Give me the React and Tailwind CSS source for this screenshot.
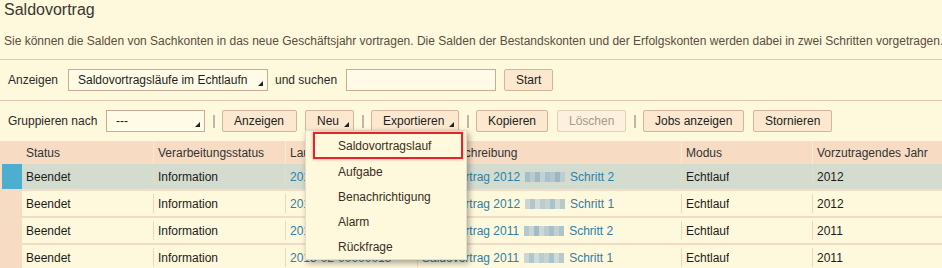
import React from "react";

const font = "font-['Liberation_Sans',Arial,sans-serif]";

function Tri() {
  return (
    <svg width="5" height="5" viewBox="0 0 5 5" className="absolute right-[4px] bottom-[4px]">
      <polygon points="5,0 5,5 0,5" fill="#222" />
    </svg>
  );
}

function Btn({ children, dd, disabled, w }) {
  return (
    <div
      className={`relative h-[22px] flex items-center justify-start pl-[11px] rounded-[2px] border ${
        disabled ? "border-[#e4d0bc] text-[#a8998a] bg-[#fdf0de]" : "border-[#d2b69b] text-[#222] bg-[#fce8cf]"
      } ${w}`}
    >
      {children}
      {dd && <Tri />}
    </div>
  );
}

function Sep() {
  return (
    <div className="w-[17px] flex justify-center">
      <div className="w-[2px] h-[13px] bg-[#c2b4a6]" />
    </div>
  );
}

function Select({ w, text }) {
  return (
    <div className={`relative h-[22px] border border-[#c9ae95] bg-[#fffbe7] flex items-center pl-[9px] text-[#1e1e1e] ${w}`}>
      {text}
      <Tri />
    </div>
  );
}

const blurA = ["bg-[#a5bfc9]", "bg-[#b9cbd0]", "bg-[#9fbac5]", "bg-[#c2d2d3]", "bg-[#a9c1ca]", "bg-[#b3c8ce]", "bg-[#9cb7c3]", "bg-[#bccdd1]"];
const blurB = ["bg-[#c9d6d4]", "bg-[#b0c6cc]", "bg-[#d1dcd8]", "bg-[#b9cccf]", "bg-[#c5d4d3]", "bg-[#aac2c9]", "bg-[#cfdbd7]", "bg-[#b6cace]"];
const blurC = ["bg-[#b3c8ce]", "bg-[#c7d5d4]", "bg-[#a2bcc6]", "bg-[#cbd8d6]", "bg-[#b8cbcf]", "bg-[#a6bfc8]", "bg-[#c1d1d2]", "bg-[#adc4cb]"];

function Blur({ pat }) {
  return (
    <div className="flex w-[40px] h-[10px] mx-[5px]">
      {pat.map((c, i) => (
        <div key={i} className={`w-[5px] h-[10px] ${c}`} />
      ))}
    </div>
  );
}

const rows = [
  { lauf: "2013-02-00000016", d: "Saldovortrag 2012", s: "Schritt 2", y: "2012", sel: true, pat: blurA },
  { lauf: "2013-02-00000015", d: "Saldovortrag 2012", s: "Schritt 1", y: "2012", pat: blurB },
  { lauf: "2013-02-00000014", d: "Saldovortrag 2011", s: "Schritt 2", y: "2011", pat: blurC },
  { lauf: "2013-02-00000013", d: "Saldovortrag 2011", s: "Schritt 1", y: "2011", pat: blurB },
];

const grid = "grid grid-cols-[22px_131px_132px_132px_264px_131px_130px]";

function Cell({ children, first, sel, cls = "" }) {
  return (
    <div className="flex items-stretch">
      {!first && <div className={`w-px my-[3px] ${sel ? "bg-[#e6dccb]" : "bg-[#f1d6bd]"}`} />}
      <div className={`flex items-center pl-[4px] whitespace-nowrap overflow-hidden ${cls}`}>{children}</div>
    </div>
  );
}

export default function App() {
  return (
    <div className={`relative w-[942px] h-[268px] overflow-hidden bg-[#fef8dc] text-[12px] ${font}`}>
      <div className="h-[20px] pl-[4px] text-[16px] leading-[20px] text-[#3a3632]">Saldovortrag</div>
      <div className="mt-[14px] pl-[4px] leading-[14px] text-[#5c4d40] whitespace-nowrap">
        Sie können die Salden von Sachkonten in das neue Geschäftsjahr vortragen. Die Salden der Bestandskonten und der Erfolgskonten werden dabei in zwei Schritten vorgetragen.
      </div>
      <div className="mt-[11px] h-px bg-[#e2c8b0]" />

      <div className="mt-[9px] h-[22px] flex items-center pl-[8px] text-[#2a2a2a]">
        <div className="w-[60px]">Anzeigen</div>
        <Select w="w-[200px]" text="Saldovortragsläufe im Echtlaufn" />
        <div className="w-[78px] pl-[7px]">und suchen</div>
        <div className="w-[150px] h-[22px] border border-[#c9ae95] bg-[#fffbe7]" />
        <div className="w-[8px]" />
        <Btn w="w-[49px]">Start</Btn>
      </div>

      <div className="mt-[9px] h-px bg-[#e2c8b0]" />

      <div className="mt-[9px] h-[22px] flex items-center pl-[8px] text-[#2a2a2a]">
        <div className="w-[98px]">Gruppieren nach</div>
        <Select w="w-[99px]" text="---" />
        <Sep />
        <Btn w="w-[75px]">Anzeigen</Btn>
        <div className="w-[8px]" />
        <Btn w="w-[49px]" dd>Neu</Btn>
        <Sep />
        <Btn w="w-[88px]" dd>Exportieren</Btn>
        <Sep />
        <Btn w="w-[72px]">Kopieren</Btn>
        <div className="w-[9px]" />
        <Btn w="w-[69px]" disabled>Löschen</Btn>
        <Sep />
        <Btn w="w-[101px]">Jobs anzeigen</Btn>
        <div className="w-[9px]" />
        <Btn w="w-[79px]">Stornieren</Btn>
      </div>

      <div className={`mt-[9px] h-[23px] bg-[#f7dcc3] text-[#333] ${grid}`}>
        <div />
        {["Status", "Verarbeitungsstatus", "Lauf", "Laufbeschreibung", "Modus", "Vorzutragendes Jahr"].map((h, i) => (
          <div key={h} className="flex items-stretch">
            {i > 0 && <div className="w-px bg-[#fbe9d8]" />}
            <div className="flex items-center pl-[4px] whitespace-nowrap">{h}</div>
          </div>
        ))}
      </div>

      {rows.map((r, i) => (
        <div
          key={i}
          className={`h-[27px] border-b-2 border-[#f3dcc6] ${grid} ${r.sel ? "bg-[#d3dccf]" : "bg-[#fef8dc]"} text-[#1c1c1c]`}
        >
          <div className="bg-[#f7dcc3] pl-[2px] flex">
            {r.sel && <div className="flex-1 bg-[#4eaed0]" />}
          </div>
          <Cell first sel={r.sel}>Beendet</Cell>
          <Cell sel={r.sel}>Information</Cell>
          <Cell sel={r.sel} cls="text-[#2f80a8]">{r.lauf}</Cell>
          <Cell sel={r.sel} cls="text-[#2f80a8]">
            {r.d}
            <Blur pat={r.pat} />
            {r.s}
          </Cell>
          <Cell sel={r.sel}>Echtlauf</Cell>
          <Cell sel={r.sel}>{r.y}</Cell>
        </div>
      ))}

      <div className="absolute left-[305px] top-[130px] w-[162px] h-[130px] bg-[#fef8dc] border border-[#e8dcc4] shadow-[2px_3px_6px_rgba(0,0,0,0.35)] pt-[1px] text-[#3b2e25]">
        <div className="ml-[7px] mr-[3px] h-[27px] border-2 border-[#e3262d] shadow-[0_0_3px_rgba(200,30,30,0.45)] flex items-center pl-[23px]">
          Saldovortragslauf
        </div>
        {["Aufgabe", "Benachrichtigung", "Alarm", "Rückfrage"].map((t) => (
          <div key={t} className="h-[25px] flex items-center pl-[32px]">
            {t}
          </div>
        ))}
      </div>
    </div>
  );
}
